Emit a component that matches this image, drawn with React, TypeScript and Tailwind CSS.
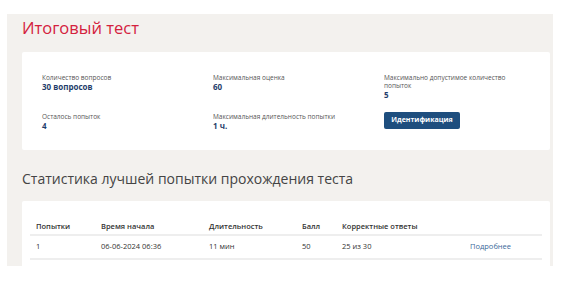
import React from 'react';

const rows = [
  { n: '1', start: '06-06-2024 06:36', dur: '11 мин', score: '50', correct: '25 из 30' },
];

function Info({ label, value }: { label: string; value: string }) {
  return (
    <div>
      <div className="text-[6.5px] leading-[8px] text-[#555]">{label}</div>
      <div className="text-[8px] font-bold leading-[9px] text-[#1f3d6b]">{value}</div>
    </div>
  );
}

export default function App() {
  return (
    <div className="h-[306px] w-[565px] bg-white pt-[14px] font-['Open_Sans',sans-serif]">
      <div className="ml-[7px] w-[546px] bg-[#f3f1ee] px-[15px] pt-[3px]">
        <h1 className="text-[16.5px] leading-[22px] text-[#d4213d]">Итоговый тест</h1>

        <div className="mt-[13px] h-[98px] w-[528px] rounded-[2px] bg-white pl-[20px] pt-[22px]">
          <div className="grid grid-cols-[171px_171px_140px] gap-y-[14px]">
            <Info label="Количество вопросов" value="30 вопросов" />
            <Info label="Максимальная оценка" value="60" />
            <div>
              <div className="text-[6.5px] leading-[8px] text-[#555]">Максимально допустимое количество попыток</div>
              <div className="text-[8px] font-bold leading-[9px] text-[#1f3d6b]">5</div>
            </div>
            <Info label="Осталось попыток" value="4" />
            <Info label="Максимальная длительность попытки" value="1 ч." />
            <div>
              <button className="-mt-[1px] block h-[17px] w-[76px] rounded-[2px] bg-[#1e4e7e] text-[7px] font-bold text-white">
                Идентификация
              </button>
            </div>
          </div>
        </div>

        <h2 className="mt-[19px] text-[14px] leading-[20px] text-[#444]">Статистика лучшей попытки прохождения теста</h2>

        <div className="mt-[12px] h-[65px] w-[528px] rounded-t-[2px] bg-white px-[8px] pt-[18px]">
          <table className="w-[512px] text-left text-[7.5px] text-[#333]">
            <thead>
              <tr className="h-[16px] border-b-2 border-[#eeeeee]">
                <th className="w-[71px] pl-[6px] font-semibold">Попытки</th>
                <th className="w-[108px] font-semibold">Время начала</th>
                <th className="w-[93px] font-semibold">Длительность</th>
                <th className="w-[40px] font-semibold">Балл</th>
                <th className="w-[128px] font-semibold">Корректные ответы</th>
                <th></th>
              </tr>
            </thead>
            <tbody>
              {rows.map(r => (
                <tr key={r.n} className="h-[24px] border-b-2 border-[#eeeeee]">
                  <td className="pl-[6px]">{r.n}</td>
                  <td>{r.start}</td>
                  <td>{r.dur}</td>
                  <td>{r.score}</td>
                  <td>{r.correct}</td>
                  <td className="text-[#3b6a9a]">Подробнее</td>
                </tr>
              ))}
            </tbody>
          </table>
        </div>
      </div>
    </div>
  );
}
